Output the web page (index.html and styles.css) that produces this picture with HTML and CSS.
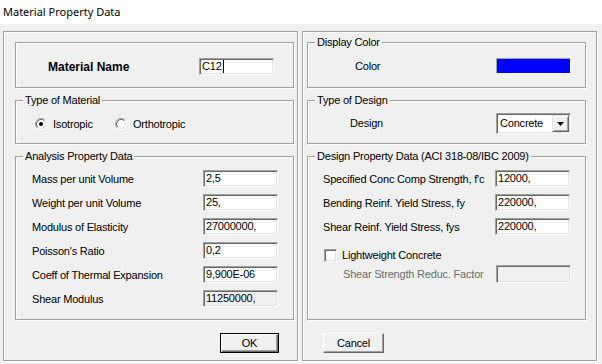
FILE: index.html
```html
<!DOCTYPE html>
<html lang="en">
<head>
<meta charset="utf-8">
<title>Material Property Data</title>
<link rel="stylesheet" href="styles.css">
</head>
<body>
<div class="titlebar">Material Property Data</div>
<div class="dialog">
  <div class="panel panel-left">
    <div class="group group-top name-row">
      <span class="name-label">Material Name</span>
      <div class="field">C12<span class="caret"></span></div>
    </div>
    <div class="group group-mid">
      <span class="legend">Type of Material</span>
      <div class="radio-row">
        <div class="radio radio-first">
          <svg class="radio-icon" width="12" height="12" viewBox="0 0 12 12">
            <path d="M2.11 9.89 A5.5 5.5 0 0 1 9.89 2.11" fill="none" stroke="#a0a0a0"/>
            <path d="M9.89 2.11 A5.5 5.5 0 0 1 2.11 9.89" fill="none" stroke="#ffffff"/>
            <circle cx="6" cy="6" r="4" fill="#ffffff"/>
            <path d="M2.82 9.18 A4.5 4.5 0 0 1 9.18 2.82" fill="none" stroke="#696969"/>
            <path d="M9.18 2.82 A4.5 4.5 0 0 1 2.82 9.18" fill="none" stroke="#e3e3e3"/>
            <circle cx="6" cy="6" r="2" fill="#000000"/>
          </svg>
          <span>Isotropic</span>
        </div>
        <div class="radio">
          <svg class="radio-icon" width="12" height="12" viewBox="0 0 12 12">
            <path d="M2.11 9.89 A5.5 5.5 0 0 1 9.89 2.11" fill="none" stroke="#a0a0a0"/>
            <path d="M9.89 2.11 A5.5 5.5 0 0 1 2.11 9.89" fill="none" stroke="#ffffff"/>
            <circle cx="6" cy="6" r="4" fill="#ffffff"/>
            <path d="M2.82 9.18 A4.5 4.5 0 0 1 9.18 2.82" fill="none" stroke="#696969"/>
            <path d="M9.18 2.82 A4.5 4.5 0 0 1 2.82 9.18" fill="none" stroke="#e3e3e3"/>
          </svg>
          <span>Orthotropic</span>
        </div>
      </div>
    </div>
    <div class="group group-big">
      <span class="legend">Analysis Property Data</span>
      <div class="form-grid analysis-grid">
        <span>Mass per unit Volume</span><div class="field">2,5</div>
        <span>Weight per unit Volume</span><div class="field">25,</div>
        <span>Modulus of Elasticity</span><div class="field">27000000,</div>
        <span>Poisson's Ratio</span><div class="field">0,2</div>
        <span>Coeff of Thermal Expansion</span><div class="field">9,900E-06</div>
        <span>Shear Modulus</span><div class="field field-readonly">11250000,</div>
      </div>
    </div>
    <div class="btn-row btn-row-left">
      <button class="btn btn-default" type="button">OK</button>
    </div>
  </div>

  <div class="panel panel-right">
    <div class="group group-top color-row">
      <span class="legend">Display Color</span>
      <span class="color-label">Color</span>
      <div class="swatch"></div>
    </div>
    <div class="group group-mid design-row">
      <span class="legend">Type of Design</span>
      <span class="design-label">Design</span>
      <div class="combo">
        <span class="combo-text">Concrete</span>
        <span class="combo-btn">
          <svg width="7" height="4" viewBox="0 0 7 4"><path d="M0 0 H7 L3.5 4 Z" fill="#000"/></svg>
        </span>
      </div>
    </div>
    <div class="group group-big">
      <span class="legend">Design Property Data (ACI 318-08/IBC 2009)</span>
      <div class="design-body">
        <div class="form-grid design-grid">
          <span>Specified Conc Comp Strength, f'c</span><div class="field">12000,</div>
          <span>Bending Reinf. Yield Stress, fy</span><div class="field">220000,</div>
          <span>Shear Reinf. Yield Stress, fys</span><div class="field">220000,</div>
        </div>
        <div class="check-row">
          <span class="checkbox"></span>
          <span>Lightweight Concrete</span>
        </div>
        <div class="disabled-row">
          <span class="disabled-label">Shear Strength Reduc. Factor</span>
          <div class="field field-readonly"></div>
        </div>
      </div>
    </div>
    <div class="btn-row btn-row-right">
      <button class="btn" type="button">Cancel</button>
    </div>
  </div>
</div>
</body>
</html>
```

FILE: styles.css
```css
* {
  box-sizing: border-box;
}

html, body {
  margin: 0;
  padding: 0;
}

body {
  width: 602px;
  height: 364px;
  overflow: hidden;
  background: #f0f0f0;
  color: #000;
  font-family: "Liberation Sans", Arial, sans-serif;
  font-size: 11px;
  letter-spacing: -0.2px;
}

.titlebar {
  height: 24px;
  background: #ffffff;
  padding-left: 3px;
  font-family: "Noto Sans", "Open Sans", sans-serif;
  font-size: 11px;
  letter-spacing: 0;
  line-height: 24px;
}

.dialog {
  display: flex;
  gap: 4px;
  padding: 7px 0 0 3px;
}

.panel {
  width: 295px;
  height: 330px;
  border: 1px solid #a0a0a0;
  box-shadow: inset 1px 1px #ffffff, 1px 1px #ffffff;
  display: flex;
  flex-direction: column;
  padding-top: 10px;
}

.panel-left {
  padding-left: 11px;
  padding-right: 3px;
}

.panel-right {
  padding-left: 4px;
  padding-right: 10px;
}

.group {
  position: relative;
  width: 279px;
  border: 1px solid #a0a0a0;
  box-shadow: inset 1px 1px #ffffff, 1px 1px #ffffff;
  flex: none;
}

.group-top {
  height: 46px;
}

.group-mid {
  height: 44px;
  margin-top: 12px;
}

.group-big {
  height: 164px;
  margin-top: 12px;
}

.legend {
  position: absolute;
  top: -8px;
  left: 7px;
  padding: 0 2px;
  line-height: 14px;
  background: #f0f0f0;
  white-space: nowrap;
}

.name-row,
.color-row,
.design-row {
  display: flex;
  align-items: flex-start;
}

/* Material name */
.name-row {
  padding: 15px 0 0 32px;
}

.name-label {
  width: 151px;
  flex: none;
  font-weight: bold;
  font-size: 12px;
  letter-spacing: 0;
  line-height: 19px;
}

/* Fields */
.field {
  width: 75px;
  height: 17px;
  flex: none;
  background: #ffffff;
  border-style: solid;
  border-width: 1px;
  border-color: #a0a0a0 #ffffff #ffffff #a0a0a0;
  box-shadow: inset 1px 1px #696969, inset -1px -1px #e3e3e3;
  padding: 1px 0 0 2px;
  line-height: 13px;
  white-space: nowrap;
  overflow: hidden;
}

.field-readonly {
  background: #f0f0f0;
}

.caret {
  display: inline-block;
  width: 1px;
  height: 13px;
  background: #000;
  vertical-align: top;
  margin-left: 1px;
}

/* Display color */
.color-row {
  padding: 14px 0 0 47px;
}

.color-label {
  width: 141px;
  flex: none;
  line-height: 18px;
}

.swatch {
  width: 75px;
  height: 16px;
  margin-top: 1px;
  background: #0000ff;
  border-style: solid;
  border-width: 1px;
  border-color: #a0a0a0 #ffffff #ffffff #a0a0a0;
}

/* Radios */
.radio-row {
  display: flex;
  padding: 17px 0 0 19px;
}

.radio {
  display: flex;
  align-items: center;
  gap: 6px;
  line-height: 12px;
}

.radio-first {
  width: 80px;
  flex: none;
}

.radio-icon {
  display: block;
  flex: none;
}

/* Design combo */
.design-row {
  padding: 12px 0 0 42px;
}

.design-label {
  width: 146px;
  flex: none;
  line-height: 21px;
}

.combo {
  width: 75px;
  height: 21px;
  display: flex;
  align-items: center;
  background: #ffffff;
  border-style: solid;
  border-width: 1px;
  border-color: #a0a0a0 #ffffff #ffffff #a0a0a0;
  box-shadow: inset 1px 1px #696969, inset -1px -1px #e3e3e3;
  padding: 1px 1px 1px 3px;
}

.combo-text {
  flex: 1;
  line-height: 17px;
}

.combo-btn {
  width: 17px;
  height: 17px;
  display: flex;
  align-items: center;
  justify-content: center;
  background: #f0f0f0;
  border-style: solid;
  border-width: 1px;
  border-color: #e3e3e3 #696969 #696969 #e3e3e3;
  box-shadow: inset 1px 1px #ffffff, inset -1px -1px #a0a0a0;
}

.combo-btn svg {
  display: block;
}

/* Grids */
.form-grid {
  display: grid;
  grid-auto-rows: 17px;
  row-gap: 7px;
  align-items: center;
  white-space: nowrap;
}

.analysis-grid {
  grid-template-columns: 171px 75px;
  padding: 13px 0 0 16px;
}

.design-body {
  padding: 13px 0 0 15px;
}

.design-grid {
  grid-template-columns: 172px 75px;
}

.check-row {
  display: flex;
  align-items: center;
  gap: 5px;
  margin: 14px 0 0 1px;
  height: 13px;
  line-height: 13px;
}

.checkbox {
  width: 13px;
  height: 13px;
  flex: none;
  background: #ffffff;
  border-style: solid;
  border-width: 1px;
  border-color: #a0a0a0 #ffffff #ffffff #a0a0a0;
  box-shadow: inset 1px 1px #696969, inset -1px -1px #e3e3e3;
}

.disabled-row {
  display: flex;
  align-items: center;
  margin-top: 3px;
  padding-left: 20px;
}

.disabled-row .field {
  height: 18px;
}

.disabled-label {
  width: 153px;
  flex: none;
  color: #6d6d6d;
  white-space: nowrap;
}

/* Buttons */
.btn-row {
  display: flex;
  margin-top: 13px;
}

.btn-row-left {
  justify-content: flex-end;
  padding-right: 15px;
}

.btn-row-right {
  padding-left: 16px;
}

.btn {
  height: 20px;
  width: 61px;
  padding: 0;
  margin: 0;
  font-family: "Liberation Sans", Arial, sans-serif;
  font-size: 11px;
  letter-spacing: -0.2px;
  color: #000;
  background: #f0f0f0;
  border-style: solid;
  border-width: 1px;
  border-color: #ffffff #696969 #696969 #ffffff;
  box-shadow: inset -1px -1px #a0a0a0;
  border-radius: 0;
}

.btn-default {
  width: 59px;
  border: 1px solid #000000;
  box-shadow: inset 1px 1px #ffffff, inset -1px -1px #696969, inset -2px -2px #a0a0a0;
}
```
